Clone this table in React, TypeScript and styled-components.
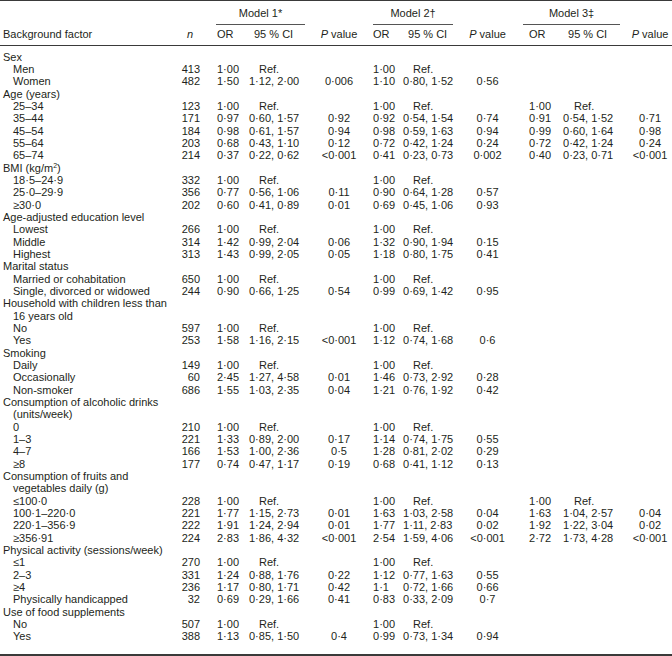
import React from "react";
import styled, { createGlobalStyle } from "styled-components";

const GlobalStyle = createGlobalStyle`
  html, body { margin: 0; padding: 0; background: #ffffff; }
`;

type Est = [string, string, string] | null;
type Row = { label: string; n: string; m: [Est, Est, Est] };
type Group = { title: React.ReactNode; cont?: string; rows: Row[] };

const R: Est = ["1·00", "Ref.", ""];

const groups: Group[] = [
  {
    title: "Sex",
    rows: [
      { label: "Men", n: "413", m: [R, R, null] },
      { label: "Women", n: "482", m: [["1·50", "1·12, 2·00", "0·006"], ["1·10", "0·80, 1·52", "0·56"], null] },
    ],
  },
  {
    title: "Age (years)",
    rows: [
      { label: "25–34", n: "123", m: [R, R, R] },
      { label: "35–44", n: "171", m: [["0·97", "0·60, 1·57", "0·92"], ["0·92", "0·54, 1·54", "0·74"], ["0·91", "0·54, 1·52", "0·71"]] },
      { label: "45–54", n: "184", m: [["0·98", "0·61, 1·57", "0·94"], ["0·98", "0·59, 1·63", "0·94"], ["0·99", "0·60, 1·64", "0·98"]] },
      { label: "55–64", n: "203", m: [["0·68", "0·43, 1·10", "0·12"], ["0·72", "0·42, 1·24", "0·24"], ["0·72", "0·42, 1·24", "0·24"]] },
      { label: "65–74", n: "214", m: [["0·37", "0·22, 0·62", "<0·001"], ["0·41", "0·23, 0·73", "0·002"], ["0·40", "0·23, 0·71", "<0·001"]] },
    ],
  },
  {
    title: (
      <>
        BMI (kg/m<sup>2</sup>)
      </>
    ),
    rows: [
      { label: "18·5–24·9", n: "332", m: [R, R, null] },
      { label: "25·0–29·9", n: "356", m: [["0·77", "0·56, 1·06", "0·11"], ["0·90", "0·64, 1·28", "0·57"], null] },
      { label: "≥30·0", n: "202", m: [["0·60", "0·41, 0·89", "0·01"], ["0·69", "0·45, 1·06", "0·93"], null] },
    ],
  },
  {
    title: "Age-adjusted education level",
    rows: [
      { label: "Lowest", n: "266", m: [R, R, null] },
      { label: "Middle", n: "314", m: [["1·42", "0·99, 2·04", "0·06"], ["1·32", "0·90, 1·94", "0·15"], null] },
      { label: "Highest", n: "313", m: [["1·43", "0·99, 2·05", "0·05"], ["1·18", "0·80, 1·75", "0·41"], null] },
    ],
  },
  {
    title: "Marital status",
    rows: [
      { label: "Married or cohabitation", n: "650", m: [R, R, null] },
      { label: "Single, divorced or widowed", n: "244", m: [["0·90", "0·66, 1·25", "0·54"], ["0·99", "0·69, 1·42", "0·95"], null] },
    ],
  },
  {
    title: "Household with children less than",
    cont: "16 years old",
    rows: [
      { label: "No", n: "597", m: [R, R, null] },
      { label: "Yes", n: "253", m: [["1·58", "1·16, 2·15", "<0·001"], ["1·12", "0·74, 1·68", "0·6"], null] },
    ],
  },
  {
    title: "Smoking",
    rows: [
      { label: "Daily", n: "149", m: [R, R, null] },
      { label: "Occasionally", n: "60", m: [["2·45", "1·27, 4·58", "0·01"], ["1·46", "0·73, 2·92", "0·28"], null] },
      { label: "Non-smoker", n: "686", m: [["1·55", "1·03, 2·35", "0·04"], ["1·21", "0·76, 1·92", "0·42"], null] },
    ],
  },
  {
    title: "Consumption of alcoholic drinks",
    cont: "(units/week)",
    rows: [
      { label: "0", n: "210", m: [R, R, null] },
      { label: "1–3", n: "221", m: [["1·33", "0·89, 2·00", "0·17"], ["1·14", "0·74, 1·75", "0·55"], null] },
      { label: "4–7", n: "166", m: [["1·53", "1·00, 2·36", "0·5"], ["1·28", "0·81, 2·02", "0·29"], null] },
      { label: "≥8", n: "177", m: [["0·74", "0·47, 1·17", "0·19"], ["0·68", "0·41, 1·12", "0·13"], null] },
    ],
  },
  {
    title: "Consumption of fruits and",
    cont: "vegetables daily (g)",
    rows: [
      { label: "≤100·0", n: "228", m: [R, R, R] },
      { label: "100·1–220·0", n: "221", m: [["1·77", "1·15, 2·73", "0·01"], ["1·63", "1·03, 2·58", "0·04"], ["1·63", "1·04, 2·57", "0·04"]] },
      { label: "220·1–356·9", n: "222", m: [["1·91", "1·24, 2·94", "0·01"], ["1·77", "1·11, 2·83", "0·02"], ["1·92", "1·22, 3·04", "0·02"]] },
      { label: "≥356·91", n: "224", m: [["2·83", "1·86, 4·32", "<0·001"], ["2·54", "1·59, 4·06", "<0·001"], ["2·72", "1·73, 4·28", "<0·001"]] },
    ],
  },
  {
    title: "Physical activity (sessions/week)",
    rows: [
      { label: "≤1", n: "270", m: [R, R, null] },
      { label: "2–3", n: "331", m: [["1·24", "0·88, 1·76", "0·22"], ["1·12", "0·77, 1·63", "0·55"], null] },
      { label: "≥4", n: "236", m: [["1·17", "0·80, 1·71", "0·42"], ["1·1", "0·72, 1·66", "0·66"], null] },
      { label: "Physically handicapped", n: "32", m: [["0·69", "0·29, 1·66", "0·41"], ["0·83", "0·33, 2·09", "0·7"], null] },
    ],
  },
  {
    title: "Use of food supplements",
    rows: [
      { label: "No", n: "507", m: [R, R, null] },
      { label: "Yes", n: "388", m: [["1·13", "0·85, 1·50", "0·4"], ["0·99", "0·73, 1·34", "0·94"], null] },
    ],
  },
];

const Table = styled.table`
  width: 672px;
  border-collapse: collapse;
  table-layout: fixed;
  font-family: "Liberation Sans", Arial, Helvetica, sans-serif;
  font-size: 11px;
  line-height: 12.33px;
  color: #231f20;
  border-top: 1.5px solid #3a3a3a;
  border-bottom: 2.5px solid #3a3a3a;
`;

const Col = styled.col<{ $w: number }>`
  width: ${(p) => p.$w}px;
`;

const TopRow = styled.tr`
  height: 23px;
`;

const ModelCell = styled.th`
  font-weight: normal;
  padding: 6px 0 0 0;
  vertical-align: top;
`;

const ModelTitle = styled.div<{ $ml: number; $mr: number }>`
  text-align: center;
  border-bottom: 1px solid #555;
  padding-bottom: 5px;
  margin-left: ${(p) => p.$ml}px;
  margin-right: ${(p) => p.$mr}px;
`;

const BlankHead = styled.th`
  padding: 0;
`;

const SubRow = styled.tr`
  height: 20px;
  border-bottom: 1px solid #3a3a3a;
`;

const SubHead = styled.th<{ $align?: string; $pl?: number; $pr?: number }>`
  font-weight: normal;
  text-align: ${(p) => p.$align || "left"};
  padding: 0 ${(p) => p.$pr || 0}px 1px ${(p) => p.$pl || 0}px;
  white-space: nowrap;
  vertical-align: middle;
`;

const Ital = styled.i`
  font-style: italic;
`;

const Body = styled.tbody`
  & > tr:first-child > td {
    padding-top: 5px;
  }
  & > tr:last-child > td {
    padding-bottom: 11px;
  }
`;

const GroupCell = styled.td`
  padding: 0 0 0 3px;
  white-space: nowrap;
  sup {
    font-size: 7px;
    line-height: 0;
    vertical-align: 4px;
  }
`;

const Cont = styled.div`
  padding-left: 10px;
`;

const LabelCell = styled.td`
  padding: 0 0 0 13px;
  white-space: nowrap;
`;

const NumCell = styled.td<{ $align?: string; $pl?: number; $pr?: number }>`
  text-align: ${(p) => p.$align || "left"};
  padding: 0 ${(p) => p.$pr || 0}px 0 ${(p) => p.$pl || 0}px;
  white-space: nowrap;
`;

const cols = [170, 40, 35, 71, 46, 37, 60, 57, 39, 73, 44];

const pads = [
  { or: 7, ci: 4, ref: 14 },
  { or: 11, ci: 4, ref: 14 },
  { or: 13, ci: 8, ref: 19 },
];

function Cells({ est, k }: { est: Est; k: number }) {
  const pd = pads[k];
  if (!est) {
    return (
      <>
        <NumCell />
        <NumCell />
        <NumCell />
      </>
    );
  }
  const isRef = est[1] === "Ref.";
  return (
    <>
      <NumCell $pl={pd.or}>{est[0]}</NumCell>
      <NumCell $pl={isRef ? pd.ref : pd.ci}>{est[1]}</NumCell>
      <NumCell $align="center">{est[2]}</NumCell>
    </>
  );
}

export default function App() {
  return (
    <>
      <GlobalStyle />
      <Table>
        <colgroup>
          {cols.map((w, i) => (
            <Col key={i} $w={w} />
          ))}
        </colgroup>
        <thead>
          <TopRow>
            <BlankHead />
            <BlankHead />
            <ModelCell colSpan={2}>
              <ModelTitle $ml={6} $mr={11}>Model 1*</ModelTitle>
            </ModelCell>
            <BlankHead />
            <ModelCell colSpan={2}>
              <ModelTitle $ml={11} $mr={6}>Model 2†</ModelTitle>
            </ModelCell>
            <BlankHead />
            <ModelCell colSpan={2}>
              <ModelTitle $ml={7} $mr={8}>Model 3‡</ModelTitle>
            </ModelCell>
            <BlankHead />
          </TopRow>
          <SubRow>
            <SubHead $pl={3}>Background factor</SubHead>
            <SubHead $align="center">
              <Ital>n</Ital>
            </SubHead>
            <SubHead $pl={7}>OR</SubHead>
            <SubHead $pl={9}>95 % CI</SubHead>
            <SubHead $align="center">
              <Ital>P</Ital> value
            </SubHead>
            <SubHead $pl={11}>OR</SubHead>
            <SubHead $pl={9}>95 % CI</SubHead>
            <SubHead $align="center">
              <Ital>P</Ital> value
            </SubHead>
            <SubHead $pl={13}>OR</SubHead>
            <SubHead $pl={13}>95 % CI</SubHead>
            <SubHead $align="center">
              <Ital>P</Ital> value
            </SubHead>
          </SubRow>
        </thead>
        <Body>
          {groups.map((g, gi) => (
            <React.Fragment key={gi}>
              <tr>
                <GroupCell colSpan={11}>
                  {g.title}
                  {g.cont && <Cont>{g.cont}</Cont>}
                </GroupCell>
              </tr>
              {g.rows.map((r, ri) => (
                <tr key={ri}>
                  <LabelCell>{r.label}</LabelCell>
                  <NumCell $align="right" $pr={10}>
                    {r.n}
                  </NumCell>
                  {r.m.map((e, k) => (
                    <Cells key={k} est={e} k={k} />
                  ))}
                </tr>
              ))}
            </React.Fragment>
          ))}
        </Body>
      </Table>
    </>
  );
}
